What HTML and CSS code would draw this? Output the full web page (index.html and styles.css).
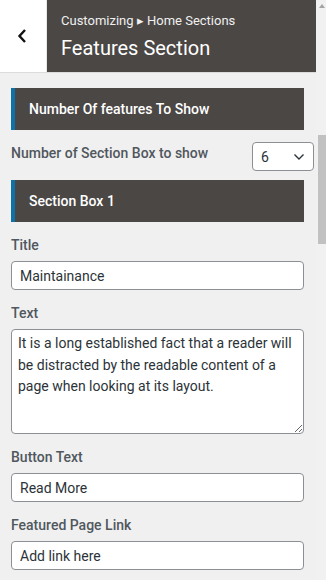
FILE: index.html
```html
<!DOCTYPE html>
<html lang="en">
<head>
  <meta charset="UTF-8">
  <title>Features Section</title>
  <meta name="viewport" content="width=device-width, initial-scale=1.0">
  <link rel="stylesheet" href="styles.css">
</head>
<body>

<div class="page">
  <div class="panel">
    <div class="panel-head">
      <button class="back" aria-label="Back">
        <svg width="10" height="16" viewBox="0 0 10 16"><path d="M8 2 L2.5 8 L8 14" fill="none" stroke="#111" stroke-width="2.4"/></svg>
      </button>
      <div class="head-title">
        <span class="crumb">Customizing &#9656; Home Sections</span>
        <h1>Features Section</h1>
      </div>
    </div>

    <div class="panel-body">
      <h3 class="section-head">Number Of features To Show</h3>

      <div class="select-row">
        <label>Number of Section Box to show</label>
        <div class="select">
          <span>6</span>
          <svg width="12" height="8" viewBox="0 0 12 8"><path d="M1.5 1.5 L6 6 L10.5 1.5" fill="none" stroke="#2c3338" stroke-width="1.4"/></svg>
        </div>
      </div>

      <h3 class="section-head">Section Box 1</h3>

      <div class="field">
        <label>Title</label>
        <input type="text" value="Maintainance">
      </div>
      <div class="field">
        <label>Text</label>
        <textarea rows="4">It is a long established fact that a reader will be distracted by the readable content of a page when looking at its layout.</textarea>
      </div>
      <div class="field">
        <label>Button Text</label>
        <input type="text" value="Read More">
      </div>
      <div class="field">
        <label>Featured Page Link</label>
        <input type="text" placeholder="Add link here">
      </div>
    </div>
  </div>

  <div class="scrollbar">
    <span class="arrow"></span>
    <span class="thumb"></span>
  </div>
</div>

</body>
</html>
```

FILE: styles.css
```css
html, body {
  margin: 0;
  height: 100%;
  overflow: hidden;
}
body {
  font-family: Roboto, 'Noto Sans', sans-serif;
  background-color: #f0f0f0;
  color: #50575e;
}
.page {
  display: flex;
  height: 580px;
}
.panel {
  width: 316px;
  flex-shrink: 0;
}
.panel-head {
  display: flex;
  height: 72px;
  border-bottom: 1px solid #dcdcde;
}
.back {
  width: 47px;
  height: 72px;
  background: #fff;
  border: none;
  border-right: 1px solid #e8e8e8;
  padding: 0 2px 0 0;
  display: flex;
  align-items: center;
  justify-content: center;
}
.head-title {
  flex: 1;
  background: #4b4745;
  color: #fff;
  padding: 12px 0 0 14px;
}
.crumb {
  display: block;
  font-size: 13px;
  line-height: 18px;
  color: #f0f0f0;
}
.head-title h1 {
  margin: 6px 0 0;
  font-size: 20px;
  font-weight: 400;
  line-height: 24px;
}
.panel-body {
  padding: 15px 12px 0 11px;
}
.section-head {
  margin: 0;
  height: 42px;
  line-height: 42px;
  background: #4b4745;
  border-left: 4px solid #0e72a6;
  color: #fff;
  font-size: 14px;
  font-weight: 500;
  padding-left: 14px;
}
.select-row {
  display: flex;
  align-items: center;
  justify-content: space-between;
  margin: 12px -10px 9px 0;
}
.select-row label {
  font-size: 14px;
  font-weight: 500;
  color: #50575e;
  margin-top: -8px;
}
.select {
  height: 27px;
  width: 44px;
  background: #fff;
  border: 1px solid #8c8f94;
  border-radius: 4px;
  display: flex;
  align-items: center;
  justify-content: space-between;
  padding: 0 8px 0 8px;
  font-size: 14px;
  color: #2c3338;
}
.field {
  margin-bottom: 14px;
}
.section-head + .field {
  margin-top: 14px;
}
.field label {
  display: block;
  font-size: 14px;
  font-weight: 500;
  line-height: 18px;
  margin-bottom: 7px;
  color: #50575e;
}
input, textarea {
  display: block;
  width: 100%;
  box-sizing: border-box;
  border: 1px solid #8c8f94;
  border-radius: 4px;
  background: #fff;
  font-family: Roboto, 'Noto Sans', sans-serif;
  font-size: 14px;
  color: #2c3338;
  margin: 0;
}
input {
  height: 29px;
  padding: 0 8px;
}
input::placeholder {
  color: #2c3338;
}
textarea {
  height: 105px;
  padding: 3px 6px;
  line-height: 21.5px;
  resize: vertical;
}
.scrollbar {
  flex: 1;
  position: relative;
  background: #f1f1f1;
}
.arrow {
  position: absolute;
  top: 4px;
  left: 3px;
  border-left: 3px solid transparent;
  border-right: 3px solid transparent;
  border-bottom: 4px solid #a3a3a3;
}
.thumb {
  position: absolute;
  top: 135px;
  left: 2px;
  right: 0;
  height: 109px;
  background: #c1c1c1;
}
```
